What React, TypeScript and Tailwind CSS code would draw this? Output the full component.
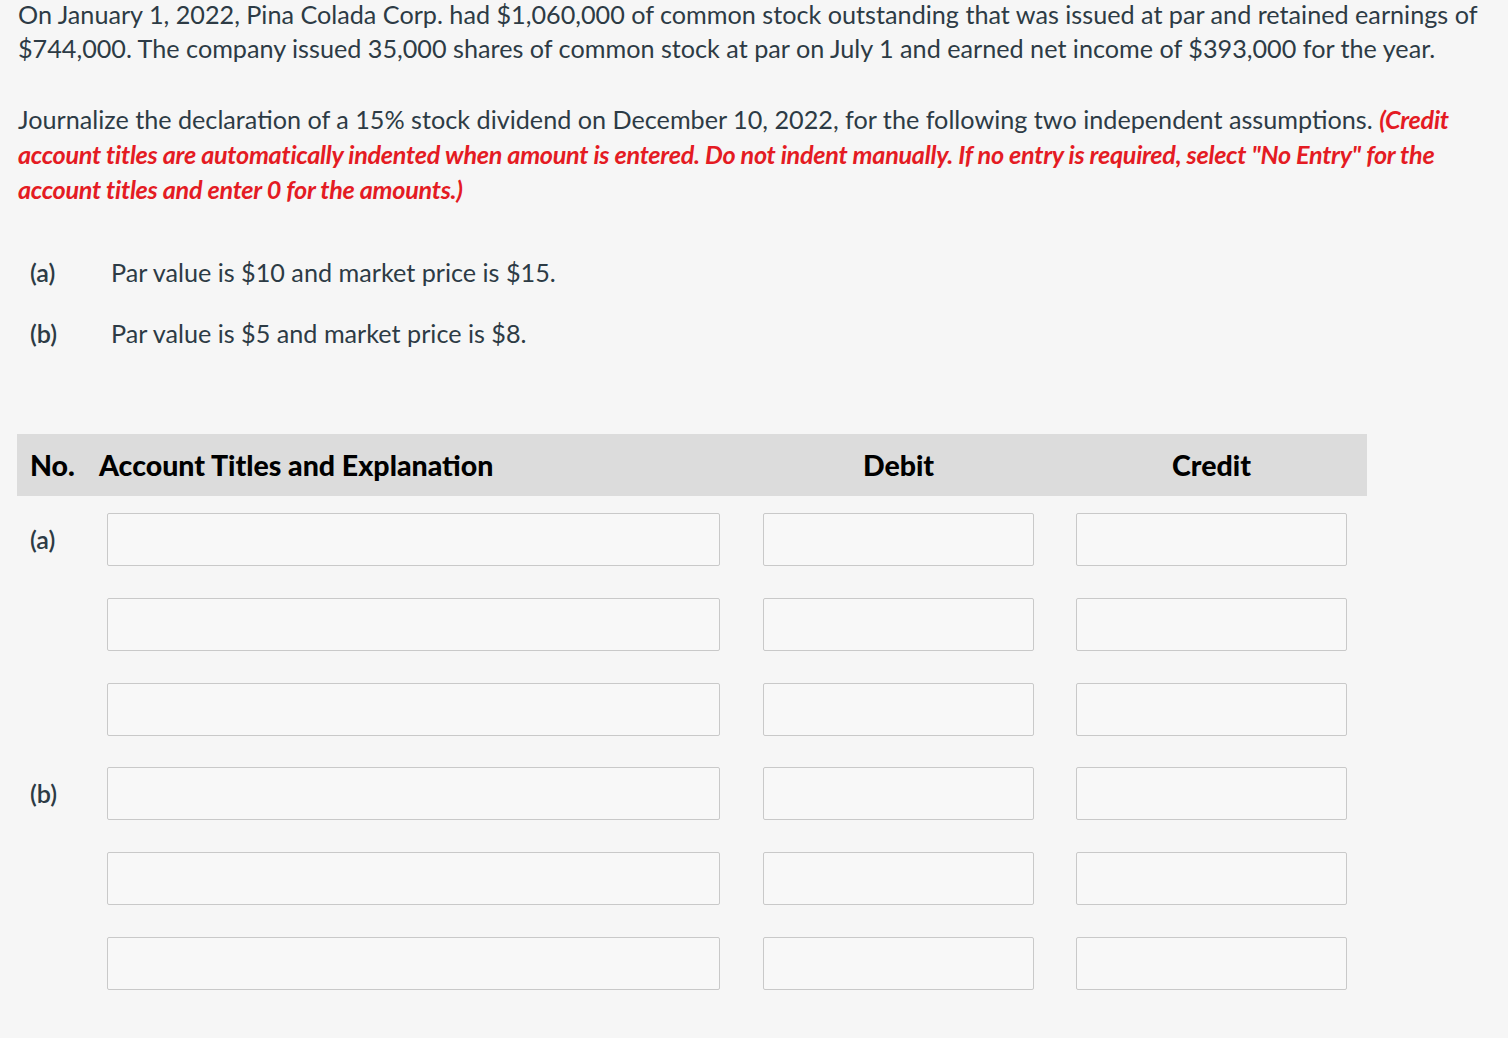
const rows = [
  { label: '(a)' },
  { label: '' },
  { label: '' },
  { label: '(b)' },
  { label: '' },
  { label: '' },
];

const Field = ({ w }: { w: string }) => (
  <div className={`${w} h-[53px] rounded-[2px] border border-[#c9c9c9] bg-[#f8f8f8]`} />
);

export default function App() {
  return (
    <div className="min-h-[1041px] w-full bg-[#f6f6f6] pl-[18px] font-['Lato','Liberation_Sans',sans-serif] text-[#2d3b45]">
      <p className="-mt-[3px] w-[1470px] text-[25.2px] leading-[34px]">
        On January 1, 2022, Pina Colada Corp. had $1,060,000 of common stock outstanding that was issued at par and retained earnings of $744,000. The company issued 35,000 shares of common stock at par on July 1 and earned net income of $393,000 for the year.
      </p>

      <p className="mt-[37px] w-[1470px] text-[25.2px] leading-[35px]">
        Journalize the declaration of a 15% stock dividend on December 10, 2022, for the following two independent assumptions.{' '}
        <span className="font-bold italic tracking-[-0.28px] text-[#e41b23]">
          (Credit account titles are automatically indented when amount is entered. Do not indent manually. If no entry is required, select "No Entry" for the account titles and enter 0 for the amounts.)
        </span>
      </p>

      <div className="mt-[48px] flex flex-col gap-[27px] pl-[12px] text-[25.2px] leading-[34px]">
        <div className="flex">
          <span className="w-[81px] font-semibold">(a)</span>
          <span>Par value is $10 and market price is $15.</span>
        </div>
        <div className="flex">
          <span className="w-[81px] font-semibold">(b)</span>
          <span>Par value is $5 and market price is $8.</span>
        </div>
      </div>

      <div className="mt-[84px] -ml-[1px] w-[1350px]">
        <div className="flex h-[62px] items-center bg-[#dcdcdc] text-[28.5px] font-black text-black">
          <div className="w-[82px] pl-[13px]">No.</div>
          <div className="w-[614px]">Account Titles and Explanation</div>
          <div className="ml-[50px] w-[271px] text-center">Debit</div>
          <div className="ml-[42px] w-[271px] text-center">Credit</div>
        </div>

        <div className="mt-[17px] flex flex-col gap-[31.8px]">
          {rows.map((r, i) => (
            <div key={i} className="flex items-center">
              <div className="w-[90px] pl-[13px] text-[25.2px] font-semibold text-[#2d3b45]">{r.label}</div>
              <Field w="w-[613px]" />
              <div className="ml-[43px]"><Field w="w-[271px]" /></div>
              <div className="ml-[42px]"><Field w="w-[271px]" /></div>
            </div>
          ))}
        </div>
      </div>
    </div>
  );
}
